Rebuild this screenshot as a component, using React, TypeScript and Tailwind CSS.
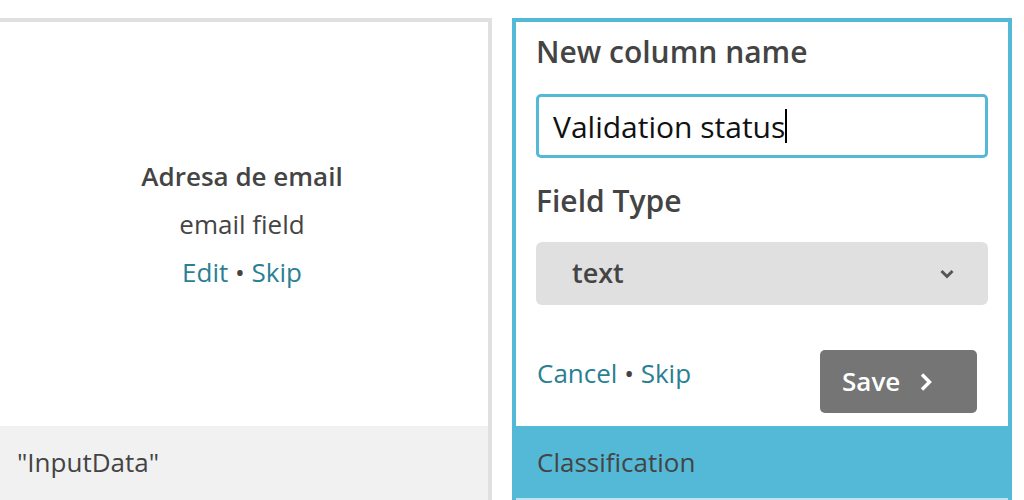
import React from 'react';

const font = { fontFamily: '"Open Sans", "Noto Sans", sans-serif' };

function LeftCard() {
  return (
    <div className="-ml-2 w-[500px] shrink-0 border-4 border-b-0 border-[#e0e0e0] flex flex-col">
      <div className="flex-1 flex flex-col items-center justify-center text-[26px] leading-[48px] text-[#444]">
        <div className="font-semibold">Adresa de email</div>
        <div>email field</div>
        <div className="text-[#2b7f94]">
          Edit <span className="text-[#444]">•</span> Skip
        </div>
      </div>
      <div className="h-[74px] shrink-0 bg-[#f1f1f1] pl-[21px] pb-[2px] flex items-center text-[26px] text-[#444]">
        "InputData"
      </div>
    </div>
  );
}

function EditCard() {
  return (
    <div className="w-[500px] shrink-0 border-4 border-b-0 border-[#54b9d7] flex flex-col">
      <div className="px-5 pt-[11px] flex flex-col">
        <label className="text-[30px] leading-[38px] font-semibold text-[#444]">New column name</label>
        <div className="mt-[23px] h-16 rounded-[5px] border-[3px] border-[#54b9d7] pl-[14px] flex items-center text-[30px] text-[#111]">
          Validation status
          <span className="inline-block w-[2px] h-[34px] bg-black" />
        </div>
        <label className="mt-6 text-[30px] leading-[38px] font-semibold text-[#444]">Field Type</label>
        <div className="mt-[22px] h-[63px] rounded-[6px] bg-[#e0e0e0] pl-9 pr-[33px] flex items-center justify-between">
          <span className="text-[27px] font-semibold text-[#444]">text</span>
          <svg width="16" height="12" viewBox="0 0 16 12">
            <polyline points="2.5,3 8,8.5 13.5,3" fill="none" stroke="#555" strokeWidth="3" />
          </svg>
        </div>
        <div className="mt-[45px] flex items-start justify-between pr-[11px]">
          <div className="mt-[5px] pl-px text-[26px] leading-[36px] text-[#2b7f94]">
            Cancel <span className="text-[#444]">•</span> Skip
          </div>
          <button className="w-[157px] h-[63px] rounded-[5px] bg-[#757575] pl-[22px] flex items-center gap-[19px] text-white text-[26px] font-semibold">
            Save
            <svg width="14" height="22" viewBox="0 0 14 22">
              <polyline points="3,3.5 10.5,11 3,18.5" fill="none" stroke="#fff" strokeWidth="3.4" />
            </svg>
          </button>
        </div>
      </div>
      <div className="mt-[13px] -mx-1 h-[72px] shrink-0 bg-[#54b9d7] pl-[25px] flex items-center text-[26px] text-[#444]">
        Classification
      </div>
      <div className="h-12 shrink-0 bg-[#bfe3ef]" />
    </div>
  );
}

export default function App() {
  return (
    <div style={font} className="h-[500px] w-[1024px] overflow-hidden bg-white pt-[18px] flex gap-5">
      <LeftCard />
      <EditCard />
    </div>
  );
}
